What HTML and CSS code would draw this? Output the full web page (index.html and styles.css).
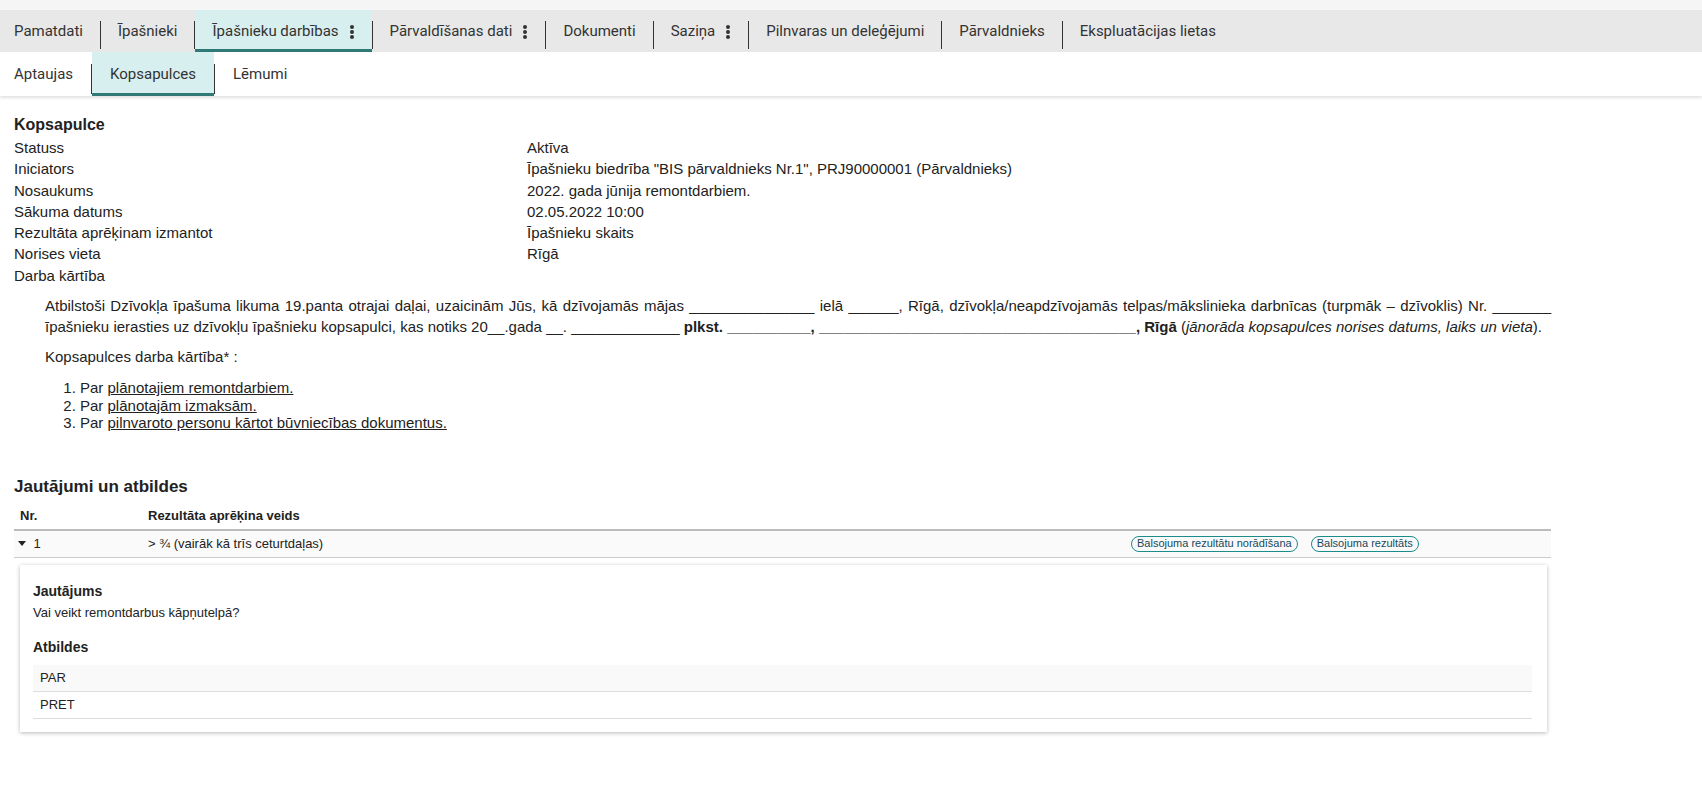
FILE: index.html
```html
<!DOCTYPE html>
<html lang="lv">

<head>
    <meta charset="UTF-8">
    <meta name="viewport" content="width=device-width, initial-scale=1.0">
    <title>Kopsapulce</title>
    <link rel="stylesheet" href="styles.css">
</head>

<body>
    <div class="top-strip"></div>

    <!-- main tabs -->
    <nav class="tabs">
        <a class="tab first">Pamatdati</a>
        <span class="sep"></span>
        <a class="tab">Īpašnieki</a>
        <span class="sep"></span>
        <a class="tab active">Īpašnieku darbības
            <svg class="dots" width="6" height="16" viewBox="0 0 6 16"><circle cx="3" cy="3" r="2"/><circle cx="3" cy="8" r="2"/><circle cx="3" cy="13" r="2"/></svg>
        </a>
        <span class="sep"></span>
        <a class="tab">Pārvaldīšanas dati
            <svg class="dots" width="6" height="16" viewBox="0 0 6 16"><circle cx="3" cy="3" r="2"/><circle cx="3" cy="8" r="2"/><circle cx="3" cy="13" r="2"/></svg>
        </a>
        <span class="sep"></span>
        <a class="tab">Dokumenti</a>
        <span class="sep"></span>
        <a class="tab">Saziņa
            <svg class="dots" width="6" height="16" viewBox="0 0 6 16"><circle cx="3" cy="3" r="2"/><circle cx="3" cy="8" r="2"/><circle cx="3" cy="13" r="2"/></svg>
        </a>
        <span class="sep"></span>
        <a class="tab">Pilnvaras un deleģējumi</a>
        <span class="sep"></span>
        <a class="tab">Pārvaldnieks</a>
        <span class="sep"></span>
        <a class="tab">Ekspluatācijas lietas</a>
    </nav>

    <!-- sub tabs -->
    <nav class="subtabs">
        <a class="subtab first">Aptaujas</a>
        <span class="sep"></span>
        <a class="subtab active">Kopsapulces</a>
        <span class="sep"></span>
        <a class="subtab">Lēmumi</a>
    </nav>

    <main class="content">
        <h2 class="title">Kopsapulce</h2>
        <div class="details">
            <div>Statuss</div><div>Aktīva</div>
            <div>Iniciators</div><div>Īpašnieku biedrība "BIS pārvaldnieks Nr.1", PRJ90000001 (Pārvaldnieks)</div>
            <div>Nosaukums</div><div>2022. gada jūnija remontdarbiem.</div>
            <div>Sākuma datums</div><div>02.05.2022 10:00</div>
            <div>Rezultāta aprēķinam izmantot</div><div>Īpašnieku skaits</div>
            <div>Norises vieta</div><div>Rīgā</div>
            <div>Darba kārtība</div><div></div>
        </div>

        <div class="agenda">
            <p class="just">Atbilstoši Dzīvokļa īpašuma likuma 19.panta otrajai daļai, uzaicinām Jūs, kā dzīvojamās mājas _______________ ielā ______, Rīgā, dzīvokļa/neapdzīvojamās telpas/mākslinieka darbnīcas (turpmāk – dzīvoklis) Nr. _______ īpašnieku ierasties uz dzīvokļu īpašnieku kopsapulci, kas notiks 20__.gada __. _____________ <b>plkst. __________, ______________________________________, Rīgā</b> (<i>jānorāda kopsapulces norises datums, laiks un vieta</i>).</p>
            <p>Kopsapulces darba kārtība* :</p>
            <ol>
                <li>Par <u>plānotajiem remontdarbiem.</u></li>
                <li>Par <u>plānotajām izmaksām.</u></li>
                <li>Par <u>pilnvaroto personu kārtot būvniecības dokumentus.</u></li>
            </ol>
        </div>

        <h2 class="section-title">Jautājumi un atbildes</h2>
        <div class="qtable">
            <div class="qhead">
                <div class="cell">Nr.</div>
                <div class="cell">Rezultāta aprēķina veids</div>
                <div class="cell"></div>
            </div>
            <div class="qrow">
                <div class="cell">
                    <svg class="caret" width="8" height="5" viewBox="0 0 8 5"><polygon points="0,0 8,0 4,5"/></svg>
                    1
                </div>
                <div class="cell">&gt; ¾ (vairāk kā trīs ceturtdaļas)</div>
                <div class="cell actions">
                    <button class="pill">Balsojuma rezultātu norādīšana</button>
                    <button class="pill">Balsojuma rezultāts</button>
                </div>
            </div>

            <div class="card">
                <h3>Jautājums</h3>
                <p class="question">Vai veikt remontdarbus kāpņutelpā?</p>
                <h3 class="answers-title">Atbildes</h3>
                <div class="answer odd">PAR</div>
                <div class="answer">PRET</div>
            </div>
        </div>
    </main>
</body>

</html>
```

FILE: styles.css
```css
body {
    margin: 0;
    font-family: "Liberation Sans", Arial, sans-serif;
    color: #222;
    background: #fff;
}

.top-strip {
    height: 10px;
    background: #f5f5f5;
}

/* tabs */
.tabs,
.subtabs {
    display: flex;
    align-items: stretch;
    font-family: Roboto, "Liberation Sans", sans-serif;
    font-size: 15px;
    color: #333;
}

.tabs {
    height: 42px;
    background: #e8e8e8;
}

.subtabs {
    height: 44px;
    background: #fff;
    box-shadow: 0 2px 3px rgba(0, 0, 0, 0.12);
    position: relative;
}

.tab,
.subtab {
    display: flex;
    align-items: center;
    gap: 10px;
    padding: 3px 17px 0;
    border-bottom: 3px solid transparent;
    cursor: pointer;
    white-space: nowrap;
}

.subtab {
    padding: 3px 18px 0;
}

.tab.first,
.subtab.first {
    padding-left: 14px;
}

.tab.active,
.subtab.active {
    background: #d7efef;
    border-bottom-color: #2f7a76;
}

.dots {
    fill: #333;
    margin-top: 1px;
}

.sep {
    width: 1px;
    background: #333;
    align-self: center;
    height: 28px;
    margin-top: 8px;
}

.subtabs .sep {
    height: 30px;
    margin-top: 10px;
}

/* content */
.content {
    width: 1537px;
    padding: 19px 0 40px 14px;
    font-size: 15px;
}

.title {
    margin: 0 0 2px;
    font-size: 16px;
    line-height: 20px;
}

.details {
    display: grid;
    grid-template-columns: 513px 1fr;
    line-height: 21.3px;
}

.agenda {
    padding-left: 31px;
    margin-top: 9px;
}

.agenda p {
    margin: 0 0 9px;
    line-height: 21px;
}

.just {
    text-align: justify;
}

.agenda ol {
    margin: 12px 0 0;
    padding-left: 35px;
    line-height: 17.5px;
}

.section-title {
    margin: 44px 0 4px;
    font-size: 17px;
    line-height: 22px;
}

/* questions table */
.qhead,
.qrow {
    display: grid;
    grid-template-columns: 128px 983px 1fr;
    font-size: 13px;
}

.qhead {
    font-weight: bold;
    border-bottom: 2px solid #bbb;
    height: 27px;
    align-items: center;
}

.qrow {
    background: #fafafa;
    border-bottom: 1px solid #ccc;
    height: 26px;
    align-items: center;
}

.cell {
    padding: 0 6px;
}

.caret {
    fill: #222;
    margin: 0 4px 2px -2px;
}

.actions {
    display: flex;
    gap: 13px;
}

.pill {
    font-family: "Liberation Sans", Arial, sans-serif;
    font-size: 11px;
    color: #17495a;
    background: transparent;
    border: 1px solid #1a8c8c;
    border-radius: 9px;
    height: 16px;
    line-height: 13px;
    padding: 0 5px;
    cursor: pointer;
}

.card {
    margin: 7px 4px 0 6px;
    padding: 18px 15px 13px 13px;
    background: #fff;
    box-shadow: 0 1px 4px rgba(0, 0, 0, 0.28);
    font-size: 13px;
}

.card h3 {
    margin: 0;
    font-size: 14px;
    line-height: 17px;
}

.question {
    margin: 4px 0 0;
    line-height: 17px;
}

.card .answers-title {
    margin-top: 18px;
    margin-bottom: 9px;
}

.answer {
    height: 26px;
    line-height: 26px;
    padding-left: 7px;
    border-bottom: 1px solid #ddd;
}

.answer.odd {
    background: #f9f9f9;
}
```
